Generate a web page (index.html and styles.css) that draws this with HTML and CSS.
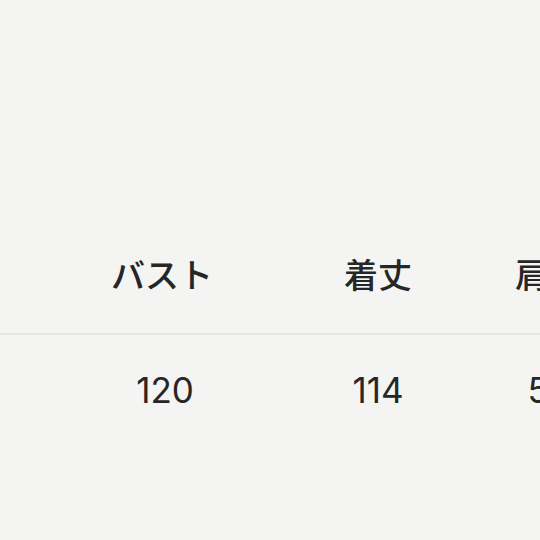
FILE: index.html
```html
<!DOCTYPE html>
<html lang="ja">
<head>
<meta charset="utf-8">
<link rel="stylesheet" href="styles.css">
</head>
<body>
<div class="page">
  <div class="table">
    <div class="row head">
      <div class="cell c0"></div>
      <div class="cell c1">バスト</div>
      <div class="cell c2">着丈</div>
      <div class="cell c3">肩幅</div>
    </div>
    <div class="row body">
      <div class="cell c0"></div>
      <div class="cell c1 num1">120</div>
      <div class="cell c2">114</div>
      <div class="cell c3">58</div>
    </div>
  </div>
</div>
</body>
</html>
```
FILE: styles.css
```css
html, body {
  margin: 0;
  padding: 0;
  background: #f4f4f2;
}
.page {
  width: 540px;
  height: 540px;
  overflow: hidden;
  background: #f4f4f2;
}
.table {
  padding-top: 257px;
  margin-left: -162px;
  width: 900px;
}
.row {
  display: flex;
}
.cell {
  text-align: center;
  flex: none;
}
.c0 { width: 216px; }
.c1 { width: 216px; }
.c2 { width: 216px; }
.c3 { width: 126px; }
.num1 { padding-left: 6px; width: 210px; }
.head {
  font-family: "Noto Sans CJK JP", sans-serif;
  font-size: 34px;
  font-weight: 500;
  line-height: 34px;
  color: #262626;
  padding-bottom: 42px;
  border-bottom: 2px solid #e5e5e3;
}
.body {
  font-family: Inter, "Noto Sans", sans-serif;
  font-size: 35px;
  line-height: 36px;
  color: #262626;
  padding-top: 37px;
}
```
